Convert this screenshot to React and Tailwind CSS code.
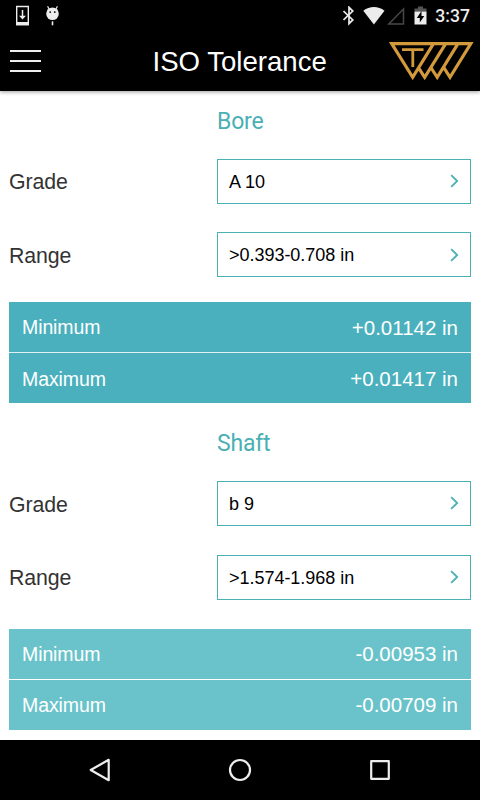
import { clsx } from "clsx";

const sections = [
  {
    title: "Bore",
    grade: "A 10",
    range: ">0.393-0.708 in",
    minimum: "+0.01142 in",
    maximum: "+0.01417 in",
    rowColor: "bg-[#4ab0bd]",
    sectionClass: "h-[322.4px]",
    resultsClass: "mt-[24.8px] gap-[1.5px] bg-[#dff1f3]",
  },
  {
    title: "Shaft",
    grade: "b 9",
    range: ">1.574-1.968 in",
    minimum: "-0.00953 in",
    maximum: "-0.00709 in",
    rowColor: "bg-[#6ac3ca]",
    sectionClass: "",
    resultsClass: "mt-[29.3px] gap-px",
  },
];

function StatusBar() {
  return (
    <div className="flex h-8 items-center justify-between bg-black pl-[15px] pr-[10px] text-[#ececec]">
      <div className="flex items-center gap-4">
        {/* download */}
        <svg width="15" height="22" viewBox="0 0 15 22" fill="none">
          <path d="M1.7 1.5h11.6v18H1.7z" stroke="currentColor" strokeWidth="1.4" />
          <path d="M1 17h13v3.3H1z" fill="currentColor" />
          <path d="M7.5 5v8" stroke="currentColor" strokeWidth="1.5" />
          <path d="M4 10.7h7L7.5 14.5z" fill="currentColor" />
        </svg>
        {/* debug bot */}
        <svg width="14" height="22" viewBox="0 0 14 22" fill="none">
          <circle cx="6.5" cy="8.8" r="6.3" fill="currentColor" />
          <path d="M1.6 1.3l1.8 3.4M11.4 1.3L9.6 4.7" stroke="currentColor" strokeWidth="1.2" />
          <path d="M6.5 16.3v4" stroke="currentColor" strokeWidth="1.6" />
          <circle cx="4.2" cy="7.1" r="0.9" fill="#000" />
          <circle cx="8.8" cy="7.1" r="0.9" fill="#000" />
        </svg>
      </div>
      <div className="flex items-center">
        {/* bluetooth */}
        <svg width="12" height="20" viewBox="0 0 12 20" fill="none">
          <path
            d="M.5 5l9.3 8.9L6 17.7V1.3l3.8 3.8L.5 14"
            stroke="currentColor"
            strokeWidth="1.7"
          />
        </svg>
        <svg className="ml-[8px]" width="22" height="20" viewBox="0 0 22 20">
          <path d="M.3 4.8C6.5 -.2 15.3 -.2 21.5 4.8L10.9 18.5z" fill="currentColor" />
        </svg>
        <svg className="ml-[2px]" width="18" height="20" viewBox="0 0 18 20" fill="none">
          <path d="M1.8 18L16.5 3v15z" stroke="#484848" strokeWidth="1.5" />
        </svg>
        <svg className="ml-[9px]" width="13" height="20" viewBox="0 0 13 20">
          <path d="M4 .5h5v2h3.5v3H.5v-3H4z" fill="#555" />
          <path d="M.5 5.5h12v13H.5z" fill="currentColor" />
          <path d="M7.5 5L2.8 12h3v4.5l4.5-6.5H7.500z" fill="#000" />
        </svg>
        <span className="ml-[8px] pt-px font-['Roboto',sans-serif] text-[17.6px] leading-none font-medium">
          3:37
        </span>
      </div>
    </div>
  );
}

function Logo() {
  return (
    <svg width="88" height="42" viewBox="0 0 88 42" fill="none" stroke="#d39a3c">
      <path
        d="M3.7 3.7H82.8L62 37.3L55.7 27.3M82.800 3.700H3.700L24.700 37.300L45.500 3.700M30.600 27.800L36.700 37.300L57.700 3.700M42.900 27.500L49.200 37.300L70 3.700"
        strokeWidth="3.2"
      />
      <path d="M14 9.600H35.500M24.800 9.600V27" strokeWidth="2.8" />
    </svg>
  );
}

function Header() {
  return (
    <header className="relative z-10 flex h-[59px] items-start bg-black pl-[10px] pr-1 shadow-[0_1px_4px_rgba(0,0,0,0.4)]">
      <button className="mt-[18px] flex w-[142.5px] flex-col gap-2" aria-label="Menu">
        <span className="h-[2px] w-[31px] bg-[#eee]" />
        <span className="h-[2px] w-[31px] bg-[#eee]" />
        <span className="h-[2px] w-[31px] bg-[#eee]" />
      </button>
      <h1 className="mt-[14px] text-[27.6px] leading-8 text-white">ISO Tolerance</h1>
      <div className="mt-2 ml-auto">
        <Logo />
      </div>
    </header>
  );
}

function SelectRow({ label, value }) {
  return (
    <div className="flex h-[45px] items-center">
      <span className="w-[208px] pt-1 text-[21.3px] tracking-[-0.1px] text-[#333]">{label}</span>
      <button className="flex h-full flex-1 items-center justify-between border border-[#4ab0b4] bg-white px-[11px] text-[18px] tracking-[-0.03px] text-black">
        <span className="pt-[2.4px]">{value}</span>
        <svg width="9" height="14" viewBox="0 0 9 14" fill="none">
          <path d="M1.2 1.2L7.2 7L1.2 12.8" stroke="#4ab0b4" strokeWidth="1.8" />
        </svg>
      </button>
    </div>
  );
}

function ResultRow({ label, value, color }) {
  return (
    <div className={clsx("flex h-[50px] items-center justify-between px-[13px] pt-px text-white", color)}>
      <span className="pt-px text-[19.5px] tracking-[-0.1px]">{label}</span>
      <span className="pt-px text-[20.5px]">{value}</span>
    </div>
  );
}

function ToleranceSection({ section }) {
  return (
    <section className={section.sectionClass}>
      <h2 className="pl-[208px] font-['Roboto',sans-serif] text-[23px] leading-7 tracking-[-0.2px] text-[#4ab0b4]">
        {section.title}
      </h2>
      <div className="mt-[22.9px] flex flex-col gap-[28.6px]">
        <SelectRow label="Grade" value={section.grade} />
        <SelectRow label="Range" value={section.range} />
      </div>
      <div className={clsx("flex flex-col", section.resultsClass)}>
        <ResultRow label="Minimum" value={section.minimum} color={section.rowColor} />
        <ResultRow label="Maximum" value={section.maximum} color={section.rowColor} />
      </div>
    </section>
  );
}

function NavigationBar() {
  return (
    <nav className="flex h-[60px] items-center justify-center gap-[116px] bg-black">
      <svg width="24" height="24" viewBox="0 0 24 24" fill="none">
        <path d="M2.7 12L20.7 1.8V22.2z" stroke="#eee" strokeWidth="2.2" strokeLinejoin="round" />
      </svg>
      <svg width="24" height="24" viewBox="0 0 24 24" fill="none">
        <circle cx="12" cy="12" r="10" stroke="#eee" strokeWidth="2.2" />
      </svg>
      <svg width="24" height="24" viewBox="0 0 24 24" fill="none">
        <path d="M3.2 3.2h17.6v17.6H3.2z" stroke="#eee" strokeWidth="2.2" strokeLinejoin="round" />
      </svg>
    </nav>
  );
}

export default function App() {
  return (
    <div className="flex h-[800px] w-[480px] flex-col overflow-hidden bg-white font-['Liberation_Sans',Arial,sans-serif]">
      <StatusBar />
      <Header />
      <main className="flex-1 px-[9px] pt-[16.7px]">
        {sections.map((section) => (
          <ToleranceSection key={section.title} section={section} />
        ))}
      </main>
      <NavigationBar />
    </div>
  );
}
